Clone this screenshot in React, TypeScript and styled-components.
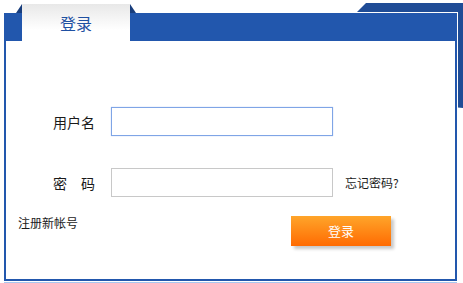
import React from "react";
import styled, { createGlobalStyle } from "styled-components";

const GlobalStyle = createGlobalStyle`
  html, body {
    margin: 0;
    padding: 0;
    background: #ffffff;
  }

  body {
    font-family: "Noto Sans CJK SC", "Noto Sans", sans-serif;
    color: #222222;
  }
`;

const Frame = styled.div`
  position: relative;
  width: 463px;
  height: 283px;
  padding: 13px 0 0 4px;
  box-sizing: border-box;
  overflow: hidden;
`;

const BackSheet = styled.div`
  position: absolute;
  top: 3px;
  left: 357px;
  width: 106px;
  height: 105px;
  background: #1f4c96;
  clip-path: polygon(9px 0, 100% 0, 100% 100%, 0 calc(100% - 10px), 0 9px);
`;

const Panel = styled.div`
  position: relative;
  z-index: 1;
  display: flex;
  flex-direction: column;
  width: 453px;
  height: 268px;
  box-sizing: border-box;
  border: 2px solid #2257ad;
  border-top: none;
  background: #ffffff;
  box-shadow: 1px -1px 0 #ffffff, 0 1px 0 #ffffff, 0 2px 0 #a9c7ef;
`;

const Header = styled.div`
  display: flex;
  height: 28px;
  margin: 0 -2px;
  background: #2257ad;
`;

const Tab = styled.div`
  position: relative;
  display: flex;
  align-items: center;
  justify-content: center;
  width: 108px;
  height: 37px;
  margin: -9px 0 0 18px;
  background: linear-gradient(#e8e8e8, #ffffff 70%);
  color: #1e50a2;
  font-size: 16px;
  line-height: 16px;

  &::before,
  &::after {
    content: "";
    position: absolute;
    top: 0;
    width: 6px;
    height: 9px;
    background: #183d7c;
  }

  &::before {
    left: -6px;
    clip-path: polygon(100% 0, 100% 100%, 0 100%);
  }

  &::after {
    right: -6px;
    clip-path: polygon(0 0, 100% 100%, 0 100%);
  }
`;

const Form = styled.form`
  display: flex;
  flex-direction: column;
  flex: 1;
  margin: 0;
  padding-top: 66px;
`;

const FieldRow = styled.div<{ $after: number }>`
  display: grid;
  grid-template-columns: 89px 222px auto;
  column-gap: 16px;
  align-items: center;
  margin-bottom: ${(p) => p.$after}px;
`;

const Label = styled.label`
  text-align: right;
  font-size: 14px;
  line-height: 16px;
  color: #1a1a1a;
`;

const Input = styled.input`
  width: 222px;
  height: 29px;
  box-sizing: border-box;
  padding: 0 4px;
  border: 1px solid #c8c8c8;
  border-radius: 0;
  outline: none;
  font-family: "Noto Sans CJK SC", "Noto Sans", sans-serif;
  font-size: 13px;
  caret-color: #333333;

  &:focus {
    border-color: #7fa5e6;
    box-shadow: 0 0 1px 0 #a9c4f0;
  }
`;

const Forgot = styled.a`
  margin-left: -4px;
  font-size: 12px;
  line-height: 14px;
  color: #1a1a1a;
  text-decoration: none;
`;

const ActionRow = styled.div`
  display: flex;
  justify-content: space-between;
  align-items: flex-start;
  padding: 0 64px 0 12px;
`;

const Register = styled.a`
  font-size: 12px;
  line-height: 14px;
  color: #1a1a1a;
  text-decoration: none;
`;

const SubmitButton = styled.button`
  width: 100px;
  height: 30px;
  border: none;
  padding: 0;
  background: linear-gradient(#ffa52a, #ff6b02);
  box-shadow: 3px 3px 3px rgba(0, 0, 0, 0.22);
  color: #ffffff;
  font-family: "Noto Sans CJK SC", "Noto Sans", sans-serif;
  font-size: 13px;
  line-height: 30px;
  cursor: pointer;
`;

export default function App() {
  return (
    <>
      <GlobalStyle />
      <Frame>
        <BackSheet />
        <Panel>
          <Header>
            <Tab>登录</Tab>
          </Header>
          <Form onSubmit={(e) => e.preventDefault()}>
            <FieldRow $after={32}>
              <Label htmlFor="username">用户名</Label>
              <Input id="username" type="text" autoFocus />
            </FieldRow>
            <FieldRow $after={19}>
              <Label htmlFor="password">密　码</Label>
              <Input id="password" type="password" />
              <Forgot href="#">忘记密码?</Forgot>
            </FieldRow>
            <ActionRow>
              <Register href="#">注册新帐号</Register>
              <SubmitButton type="submit">登录</SubmitButton>
            </ActionRow>
          </Form>
        </Panel>
      </Frame>
    </>
  );
}
